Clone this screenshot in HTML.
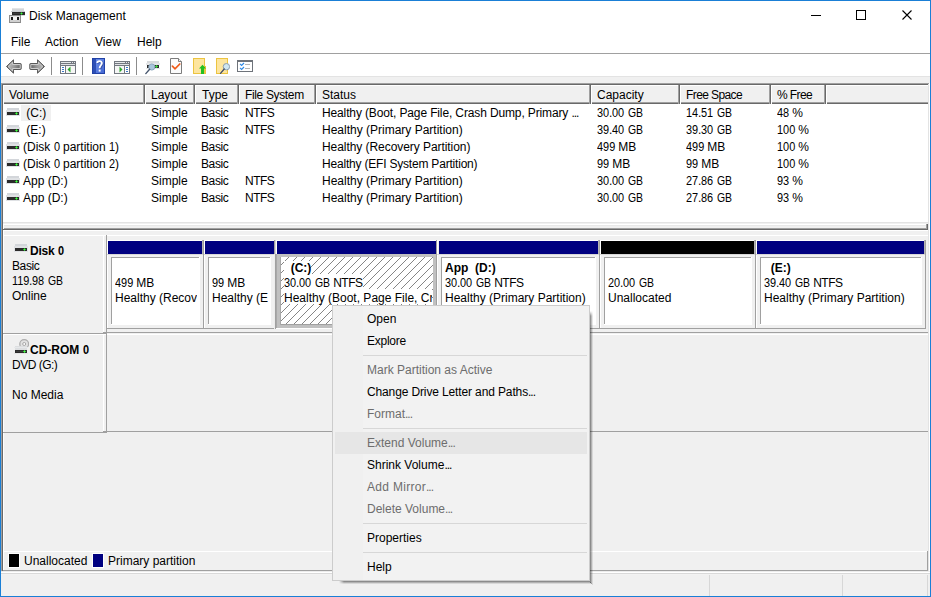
<!DOCTYPE html>
<html><head><meta charset="utf-8"><style>
html,body{margin:0;padding:0;width:931px;height:597px;overflow:hidden;background:#fff}
body div{position:absolute}
svg{display:block}
.el{letter-spacing:-1px}
.u{display:inline-block;transform:scaleX(.87);transform-origin:0 0;margin-right:-2.2px}
.n{letter-spacing:-0.5px}
.d{display:inline-block;transform:scaleX(.91);transform-origin:0 0}
.t{font-family:"Liberation Sans",sans-serif;font-size:12px;line-height:14px;white-space:pre;color:#000}
</style></head><body>
<div style="left:0px;top:0px;width:931px;height:597px;background:#fff;"></div>
<div class="t" style="left:29px;top:9px;">Disk Management</div>
<div class="t" style="left:11px;top:35px;">File</div>
<div class="t" style="left:45px;top:35px;">Action</div>
<div class="t" style="left:95px;top:35px;">View</div>
<div class="t" style="left:137px;top:35px;">Help</div>
<div style="left:1px;top:53px;width:929px;height:1px;background:#a0a0a0;"></div>
<div style="left:1px;top:76px;width:929px;height:1px;background:#e3e3e3;"></div>
<div style="left:1px;top:77px;width:929px;height:6px;background:#f0f0f0;"></div>
<div style="left:1px;top:83px;width:929px;height:1px;background:#a0a0a0;"></div>
<div style="left:2px;top:84px;width:927px;height:1px;background:#696969;"></div>
<div style="left:1px;top:83px;width:1px;height:489px;background:#a0a0a0;"></div>
<div style="left:2px;top:84px;width:1px;height:487px;background:#696969;"></div>
<div style="left:929px;top:83px;width:1px;height:489px;background:#ffffff;"></div>
<div style="left:928px;top:84px;width:1px;height:487px;background:#e3e3e3;"></div>
<div style="left:3px;top:85px;width:925px;height:137px;background:#ffffff;"></div>
<div style="left:3px;top:85px;width:142px;height:19px;background:#f0f0f0;"></div>
<div style="left:3px;top:102px;width:142px;height:1px;background:#a0a0a0;"></div>
<div style="left:3px;top:103px;width:142px;height:1px;background:#696969;"></div>
<div style="left:3px;top:85px;width:142px;height:1px;background:#ffffff;"></div>
<div style="left:3px;top:85px;width:1px;height:19px;background:#ffffff;"></div>
<div style="left:143px;top:85px;width:1px;height:19px;background:#a0a0a0;"></div>
<div style="left:144px;top:85px;width:1px;height:19px;background:#696969;"></div>
<div class="t" style="left:9px;top:88px;">Volume</div>
<div style="left:145px;top:85px;width:50px;height:19px;background:#f0f0f0;"></div>
<div style="left:145px;top:102px;width:50px;height:1px;background:#a0a0a0;"></div>
<div style="left:145px;top:103px;width:50px;height:1px;background:#696969;"></div>
<div style="left:145px;top:85px;width:50px;height:1px;background:#ffffff;"></div>
<div style="left:145px;top:85px;width:1px;height:19px;background:#ffffff;"></div>
<div style="left:193px;top:85px;width:1px;height:19px;background:#a0a0a0;"></div>
<div style="left:194px;top:85px;width:1px;height:19px;background:#696969;"></div>
<div class="t" style="left:151px;top:88px;">Layout</div>
<div style="left:195px;top:85px;width:44px;height:19px;background:#f0f0f0;"></div>
<div style="left:195px;top:102px;width:44px;height:1px;background:#a0a0a0;"></div>
<div style="left:195px;top:103px;width:44px;height:1px;background:#696969;"></div>
<div style="left:195px;top:85px;width:44px;height:1px;background:#ffffff;"></div>
<div style="left:195px;top:85px;width:1px;height:19px;background:#ffffff;"></div>
<div style="left:237px;top:85px;width:1px;height:19px;background:#a0a0a0;"></div>
<div style="left:238px;top:85px;width:1px;height:19px;background:#696969;"></div>
<div class="t" style="left:202px;top:88px;">Type</div>
<div style="left:239px;top:85px;width:77px;height:19px;background:#f0f0f0;"></div>
<div style="left:239px;top:102px;width:77px;height:1px;background:#a0a0a0;"></div>
<div style="left:239px;top:103px;width:77px;height:1px;background:#696969;"></div>
<div style="left:239px;top:85px;width:77px;height:1px;background:#ffffff;"></div>
<div style="left:239px;top:85px;width:1px;height:19px;background:#ffffff;"></div>
<div style="left:314px;top:85px;width:1px;height:19px;background:#a0a0a0;"></div>
<div style="left:315px;top:85px;width:1px;height:19px;background:#696969;"></div>
<div class="t" style="left:245px;top:88px;;letter-spacing:-0.35px;">File System</div>
<div style="left:316px;top:85px;width:275px;height:19px;background:#f0f0f0;"></div>
<div style="left:316px;top:102px;width:275px;height:1px;background:#a0a0a0;"></div>
<div style="left:316px;top:103px;width:275px;height:1px;background:#696969;"></div>
<div style="left:316px;top:85px;width:275px;height:1px;background:#ffffff;"></div>
<div style="left:316px;top:85px;width:1px;height:19px;background:#ffffff;"></div>
<div style="left:589px;top:85px;width:1px;height:19px;background:#a0a0a0;"></div>
<div style="left:590px;top:85px;width:1px;height:19px;background:#696969;"></div>
<div class="t" style="left:322px;top:88px;">Status</div>
<div style="left:591px;top:85px;width:89px;height:19px;background:#f0f0f0;"></div>
<div style="left:591px;top:102px;width:89px;height:1px;background:#a0a0a0;"></div>
<div style="left:591px;top:103px;width:89px;height:1px;background:#696969;"></div>
<div style="left:591px;top:85px;width:89px;height:1px;background:#ffffff;"></div>
<div style="left:591px;top:85px;width:1px;height:19px;background:#ffffff;"></div>
<div style="left:678px;top:85px;width:1px;height:19px;background:#a0a0a0;"></div>
<div style="left:679px;top:85px;width:1px;height:19px;background:#696969;"></div>
<div class="t" style="left:597px;top:88px;">Capacity</div>
<div style="left:680px;top:85px;width:91px;height:19px;background:#f0f0f0;"></div>
<div style="left:680px;top:102px;width:91px;height:1px;background:#a0a0a0;"></div>
<div style="left:680px;top:103px;width:91px;height:1px;background:#696969;"></div>
<div style="left:680px;top:85px;width:91px;height:1px;background:#ffffff;"></div>
<div style="left:680px;top:85px;width:1px;height:19px;background:#ffffff;"></div>
<div style="left:769px;top:85px;width:1px;height:19px;background:#a0a0a0;"></div>
<div style="left:770px;top:85px;width:1px;height:19px;background:#696969;"></div>
<div class="t" style="left:686px;top:88px;;letter-spacing:-0.6px;">Free Space</div>
<div style="left:771px;top:85px;width:55px;height:19px;background:#f0f0f0;"></div>
<div style="left:771px;top:102px;width:55px;height:1px;background:#a0a0a0;"></div>
<div style="left:771px;top:103px;width:55px;height:1px;background:#696969;"></div>
<div style="left:771px;top:85px;width:55px;height:1px;background:#ffffff;"></div>
<div style="left:771px;top:85px;width:1px;height:19px;background:#ffffff;"></div>
<div style="left:824px;top:85px;width:1px;height:19px;background:#a0a0a0;"></div>
<div style="left:825px;top:85px;width:1px;height:19px;background:#696969;"></div>
<div class="t" style="left:777px;top:88px;;letter-spacing:-0.6px;">% Free</div>
<div style="left:826px;top:85px;width:102px;height:19px;background:#f0f0f0;"></div>
<div style="left:826px;top:102px;width:102px;height:1px;background:#a0a0a0;"></div>
<div style="left:826px;top:103px;width:102px;height:1px;background:#696969;"></div>
<div style="left:826px;top:85px;width:102px;height:1px;background:#ffffff;"></div>
<div style="left:826px;top:85px;width:1px;height:19px;background:#ffffff;"></div>
<div style="left:21px;top:105px;width:30px;height:16px;background:#f0f0f0;"></div>
<div style="left:6px;top:108px;width:14px;height:8px"><svg width="14" height="8" viewBox="0 0 14 8"><rect x="1" y="0" width="12" height="2" fill="#d3d6da"/><rect x="0" y="2" width="14" height="6" fill="#dfe1e4"/><rect x="1" y="4" width="12" height="3" fill="#2b2b2b"/><rect x="9" y="5" width="3" height="1" fill="#2cbf2c"/><rect x="10" y="4" width="1" height="3" fill="#2cbf2c"/><rect x="10" y="5" width="1" height="1" fill="#48f048"/></svg></div>
<div class="t" style="left:23px;top:106px;"> (C:)</div>
<div class="t" style="left:151px;top:106px;">Simple</div>
<div class="t" style="left:201px;top:106px;;letter-spacing:-0.4px;">Basic</div>
<div class="t" style="left:245px;top:106px;"><span class="n">NTFS</span></div>
<div class="t" style="left:322px;top:106px;;letter-spacing:-0.13px;">Healthy (Boot, Page File, Crash Dump, Primary <span class="el">...</span></div>
<div class="t" style="left:597px;top:106px;"><span class="d" style="margin-right:-1.36px">30</span>.<span class="d" style="margin-right:-1.36px">00</span> <span class="u">GB</span></div>
<div class="t" style="left:686px;top:106px;"><span class="d" style="margin-right:-1.36px">14</span>.<span class="d" style="margin-right:-1.36px">51</span> <span class="u">GB</span></div>
<div class="t" style="left:777px;top:106px;"><span class="d" style="margin-right:-1.36px">48</span> %</div>
<div style="left:6px;top:125px;width:14px;height:8px"><svg width="14" height="8" viewBox="0 0 14 8"><rect x="1" y="0" width="12" height="2" fill="#d3d6da"/><rect x="0" y="2" width="14" height="6" fill="#dfe1e4"/><rect x="1" y="4" width="12" height="3" fill="#2b2b2b"/><rect x="9" y="5" width="3" height="1" fill="#2cbf2c"/><rect x="10" y="4" width="1" height="3" fill="#2cbf2c"/><rect x="10" y="5" width="1" height="1" fill="#48f048"/></svg></div>
<div class="t" style="left:23px;top:123px;"> (E:)</div>
<div class="t" style="left:151px;top:123px;">Simple</div>
<div class="t" style="left:201px;top:123px;;letter-spacing:-0.4px;">Basic</div>
<div class="t" style="left:245px;top:123px;"><span class="n">NTFS</span></div>
<div class="t" style="left:322px;top:123px;">Healthy (Primary Partition)</div>
<div class="t" style="left:597px;top:123px;"><span class="d" style="margin-right:-1.36px">39</span>.<span class="d" style="margin-right:-1.36px">40</span> <span class="u">GB</span></div>
<div class="t" style="left:686px;top:123px;"><span class="d" style="margin-right:-1.36px">39</span>.<span class="d" style="margin-right:-1.36px">30</span> <span class="u">GB</span></div>
<div class="t" style="left:777px;top:123px;"><span class="d" style="margin-right:-2.04px">100</span> %</div>
<div style="left:6px;top:142px;width:14px;height:8px"><svg width="14" height="8" viewBox="0 0 14 8"><rect x="1" y="0" width="12" height="2" fill="#d3d6da"/><rect x="0" y="2" width="14" height="6" fill="#dfe1e4"/><rect x="1" y="4" width="12" height="3" fill="#2b2b2b"/><rect x="9" y="5" width="3" height="1" fill="#2cbf2c"/><rect x="10" y="4" width="1" height="3" fill="#2cbf2c"/><rect x="10" y="5" width="1" height="1" fill="#48f048"/></svg></div>
<div class="t" style="left:23px;top:140px;">(Disk <span class="d" style="margin-right:-0.68px">0</span> partition <span class="d" style="margin-right:-0.68px">1</span>)</div>
<div class="t" style="left:151px;top:140px;">Simple</div>
<div class="t" style="left:201px;top:140px;;letter-spacing:-0.4px;">Basic</div>
<div class="t" style="left:322px;top:140px;;letter-spacing:-0.06px;">Healthy (Recovery Partition)</div>
<div class="t" style="left:597px;top:140px;"><span class="d" style="margin-right:-2.04px">499</span> MB</div>
<div class="t" style="left:686px;top:140px;"><span class="d" style="margin-right:-2.04px">499</span> MB</div>
<div class="t" style="left:777px;top:140px;"><span class="d" style="margin-right:-2.04px">100</span> %</div>
<div style="left:6px;top:159px;width:14px;height:8px"><svg width="14" height="8" viewBox="0 0 14 8"><rect x="1" y="0" width="12" height="2" fill="#d3d6da"/><rect x="0" y="2" width="14" height="6" fill="#dfe1e4"/><rect x="1" y="4" width="12" height="3" fill="#2b2b2b"/><rect x="9" y="5" width="3" height="1" fill="#2cbf2c"/><rect x="10" y="4" width="1" height="3" fill="#2cbf2c"/><rect x="10" y="5" width="1" height="1" fill="#48f048"/></svg></div>
<div class="t" style="left:23px;top:157px;">(Disk <span class="d" style="margin-right:-0.68px">0</span> partition <span class="d" style="margin-right:-0.68px">2</span>)</div>
<div class="t" style="left:151px;top:157px;">Simple</div>
<div class="t" style="left:201px;top:157px;;letter-spacing:-0.4px;">Basic</div>
<div class="t" style="left:322px;top:157px;;letter-spacing:-0.2px;">Healthy (EFI System Partition)</div>
<div class="t" style="left:597px;top:157px;"><span class="d" style="margin-right:-1.36px">99</span> MB</div>
<div class="t" style="left:686px;top:157px;"><span class="d" style="margin-right:-1.36px">99</span> MB</div>
<div class="t" style="left:777px;top:157px;"><span class="d" style="margin-right:-2.04px">100</span> %</div>
<div style="left:6px;top:176px;width:14px;height:8px"><svg width="14" height="8" viewBox="0 0 14 8"><rect x="1" y="0" width="12" height="2" fill="#d3d6da"/><rect x="0" y="2" width="14" height="6" fill="#dfe1e4"/><rect x="1" y="4" width="12" height="3" fill="#2b2b2b"/><rect x="9" y="5" width="3" height="1" fill="#2cbf2c"/><rect x="10" y="4" width="1" height="3" fill="#2cbf2c"/><rect x="10" y="5" width="1" height="1" fill="#48f048"/></svg></div>
<div class="t" style="left:23px;top:174px;">App (D:)</div>
<div class="t" style="left:151px;top:174px;">Simple</div>
<div class="t" style="left:201px;top:174px;;letter-spacing:-0.4px;">Basic</div>
<div class="t" style="left:245px;top:174px;"><span class="n">NTFS</span></div>
<div class="t" style="left:322px;top:174px;">Healthy (Primary Partition)</div>
<div class="t" style="left:597px;top:174px;"><span class="d" style="margin-right:-1.36px">30</span>.<span class="d" style="margin-right:-1.36px">00</span> <span class="u">GB</span></div>
<div class="t" style="left:686px;top:174px;"><span class="d" style="margin-right:-1.36px">27</span>.<span class="d" style="margin-right:-1.36px">86</span> <span class="u">GB</span></div>
<div class="t" style="left:777px;top:174px;"><span class="d" style="margin-right:-1.36px">93</span> %</div>
<div style="left:6px;top:193px;width:14px;height:8px"><svg width="14" height="8" viewBox="0 0 14 8"><rect x="1" y="0" width="12" height="2" fill="#d3d6da"/><rect x="0" y="2" width="14" height="6" fill="#dfe1e4"/><rect x="1" y="4" width="12" height="3" fill="#2b2b2b"/><rect x="9" y="5" width="3" height="1" fill="#2cbf2c"/><rect x="10" y="4" width="1" height="3" fill="#2cbf2c"/><rect x="10" y="5" width="1" height="1" fill="#48f048"/></svg></div>
<div class="t" style="left:23px;top:191px;">App (D:)</div>
<div class="t" style="left:151px;top:191px;">Simple</div>
<div class="t" style="left:201px;top:191px;;letter-spacing:-0.4px;">Basic</div>
<div class="t" style="left:245px;top:191px;"><span class="n">NTFS</span></div>
<div class="t" style="left:322px;top:191px;">Healthy (Primary Partition)</div>
<div class="t" style="left:597px;top:191px;"><span class="d" style="margin-right:-1.36px">30</span>.<span class="d" style="margin-right:-1.36px">00</span> <span class="u">GB</span></div>
<div class="t" style="left:686px;top:191px;"><span class="d" style="margin-right:-1.36px">27</span>.<span class="d" style="margin-right:-1.36px">86</span> <span class="u">GB</span></div>
<div class="t" style="left:777px;top:191px;"><span class="d" style="margin-right:-1.36px">93</span> %</div>
<div style="left:3px;top:222px;width:925px;height:1px;background:#e3e3e3;"></div>
<div style="left:3px;top:223px;width:925px;height:1px;background:#f0f0f0;"></div>
<div style="left:3px;top:224px;width:925px;height:6px;background:#f0f0f0;"></div>
<div style="left:3px;top:224px;width:924px;height:1px;background:#ffffff;"></div>
<div style="left:3px;top:225px;width:924px;height:1px;background:#e8e8e8;"></div>
<div style="left:3px;top:228px;width:925px;height:1px;background:#a0a0a0;"></div>
<div style="left:3px;top:229px;width:925px;height:1px;background:#696969;"></div>
<div style="left:926px;top:224px;width:1px;height:5px;background:#a0a0a0;"></div>
<div style="left:927px;top:224px;width:1px;height:6px;background:#696969;"></div>
<div style="left:3px;top:224px;width:1px;height:5px;background:#ffffff;"></div>
<div style="left:3px;top:230px;width:925px;height:341px;background:#f0f0f0;"></div>
<div style="left:3px;top:230px;width:925px;height:1px;background:#ffffff;"></div>
<div style="left:3px;top:230px;width:1px;height:341px;background:#ffffff;"></div>
<div style="left:4px;top:235px;width:924px;height:1px;background:#ffffff;"></div>
<div style="left:103px;top:236px;width:1px;height:97px;background:#ffffff;"></div>
<div style="left:106px;top:235px;width:1px;height:99px;background:#a0a0a0;"></div>
<div style="left:3px;top:333px;width:104px;height:1px;background:#a0a0a0;"></div>
<div style="left:103px;top:332px;width:825px;height:1px;background:#a0a0a0;"></div>
<div style="left:4px;top:334px;width:924px;height:1px;background:#ffffff;"></div>
<div style="left:103px;top:335px;width:1px;height:97px;background:#ffffff;"></div>
<div style="left:106px;top:334px;width:1px;height:99px;background:#a0a0a0;"></div>
<div style="left:3px;top:432px;width:104px;height:1px;background:#a0a0a0;"></div>
<div style="left:103px;top:431px;width:825px;height:1px;background:#a0a0a0;"></div>
<div style="left:14px;top:244px;width:14px;height:8px"><svg width="14" height="8" viewBox="0 0 14 8"><rect x="1" y="0" width="12" height="2" fill="#d3d6da"/><rect x="0" y="2" width="14" height="6" fill="#dfe1e4"/><rect x="1" y="4" width="12" height="3" fill="#2b2b2b"/><rect x="9" y="5" width="3" height="1" fill="#2cbf2c"/><rect x="10" y="4" width="1" height="3" fill="#2cbf2c"/><rect x="10" y="5" width="1" height="1" fill="#48f048"/></svg></div>
<div class="t" style="left:30px;top:244px;font-weight:bold;letter-spacing:-0.2px;">Disk <span class="d" style="margin-right:-0.68px">0</span></div>
<div class="t" style="left:12px;top:259px;;letter-spacing:-0.4px;">Basic</div>
<div class="t" style="left:12px;top:274px;"><span class="d" style="margin-right:-2.04px">119</span>.<span class="d" style="margin-right:-1.36px">98</span> <span class="u">GB</span></div>
<div class="t" style="left:12px;top:289px;">Online</div>
<div class="t" style="left:30px;top:343px;font-weight:bold">CD-ROM <span class="d" style="margin-right:-0.68px">0</span></div>
<div class="t" style="left:12px;top:358px;;letter-spacing:-0.5px;">DVD (G:)</div>
<div class="t" style="left:12px;top:388px;">No Media</div>
<div style="left:107px;top:240px;width:97px;height:1px;background:#ffffff;"></div>
<div style="left:107px;top:240px;width:1px;height:89px;background:#ffffff;"></div>
<div style="left:108px;top:241px;width:94px;height:13px;background:#000080;"></div>
<div style="left:107px;top:254px;width:96px;height:1px;background:#d8d8d8;"></div>
<div style="left:203px;top:240px;width:1px;height:89px;background:#a0a0a0;"></div>
<div style="left:202px;top:240px;width:1px;height:14px;background:#b4b4b4;"></div>
<div style="left:107px;top:328px;width:97px;height:1px;background:#a0a0a0;"></div>
<div style="left:111px;top:257px;width:89px;height:68px;background:#ffffff;"></div>
<div style="left:111px;top:257px;width:88px;height:1px;background:#a0a0a0;"></div>
<div style="left:111px;top:257px;width:1px;height:67px;background:#a0a0a0;"></div>
<div style="left:115px;top:260px;width:82px;height:50px;overflow:hidden">
<div class="t" style="left:0;top:16px;"><span class="d" style="margin-right:-2.04px">499</span> MB</div>
<div class="t" style="left:0;top:31px">Healthy (Recovery Partition)</div>
</div>
<div style="left:204px;top:240px;width:71px;height:1px;background:#ffffff;"></div>
<div style="left:204px;top:240px;width:1px;height:89px;background:#ffffff;"></div>
<div style="left:205px;top:241px;width:69px;height:13px;background:#000080;"></div>
<div style="left:204px;top:254px;width:70px;height:1px;background:#d8d8d8;"></div>
<div style="left:274px;top:240px;width:1px;height:89px;background:#a0a0a0;"></div>
<div style="left:204px;top:328px;width:71px;height:1px;background:#a0a0a0;"></div>
<div style="left:208px;top:257px;width:63px;height:68px;background:#ffffff;"></div>
<div style="left:208px;top:257px;width:62px;height:1px;background:#a0a0a0;"></div>
<div style="left:208px;top:257px;width:1px;height:67px;background:#a0a0a0;"></div>
<div style="left:212px;top:260px;width:56px;height:50px;overflow:hidden">
<div class="t" style="left:0;top:16px;"><span class="d" style="margin-right:-1.36px">99</span> MB</div>
<div class="t" style="left:0;top:31px">Healthy (EFI System Partition)</div>
</div>
<div style="left:275px;top:240px;width:162px;height:1px;background:#ffffff;"></div>
<div style="left:275px;top:240px;width:1px;height:89px;background:#ffffff;"></div>
<div style="left:277px;top:241px;width:159px;height:13px;background:#000080;"></div>
<div style="left:275px;top:254px;width:161px;height:1px;background:#d8d8d8;"></div>
<div style="left:436px;top:240px;width:1px;height:89px;background:#a0a0a0;"></div>
<div style="left:275px;top:328px;width:162px;height:1px;background:#a0a0a0;"></div>
<div style="left:275px;top:240px;width:1px;height:14px;background:#d8d8d8;"></div>
<div style="left:276px;top:240px;width:1px;height:14px;background:#ffffff;"></div>
<div style="left:275px;top:254px;width:161px;height:74px;background:#c0c0c0;"></div>
<div style="left:275px;top:254px;width:1px;height:74px;background:#a0a0a0;"></div>
<div style="left:276px;top:254px;width:1px;height:74px;background:#a8a8a8;"></div>
<div style="left:280px;top:257px;width:1px;height:68px;background:#a8a8a8;"></div>
<div style="left:274px;top:254px;width:1px;height:75px;background:#ececec;"></div>
<div style="left:276px;top:328px;width:161px;height:1px;background:#ffffff;"></div>
<div style="left:281px;top:257px;width:152px;height:67px;background:#fff;overflow:hidden"><svg width="160" height="67" style="position:absolute;left:0;top:0" shape-rendering="crispEdges"><defs><pattern id="h" width="8" height="8" patternUnits="userSpaceOnUse" x="0" y="0"><path d="M0 7h1v1h-1zM1 6h1v1h-1zM2 5h1v1h-1zM3 4h1v1h-1zM4 3h1v1h-1zM5 2h1v1h-1zM6 1h1v1h-1zM7 0h1v1h-1z" fill="#858585"/></pattern></defs><rect width="160" height="67" fill="url(#h)"/></svg></div>
<div style="left:281px;top:324px;width:152px;height:1px;background:#a0a0a0;"></div>
<div style="left:284px;top:260px;width:148px;height:50px;overflow:hidden">
<div style="left:0;top:1px;width:26px;height:13px;background:#fff"></div>
<div style="left:0;top:14px;width:79px;height:15px;background:#fff"></div>
<div style="left:0;top:29px;width:200px;height:15px;background:#fff"></div>
<div class="t" style="left:0;top:1px;font-weight:bold">  (C:)</div>
<div class="t" style="left:0;top:16px;"><span class="d" style="margin-right:-1.36px">30</span>.<span class="d" style="margin-right:-1.36px">00</span> <span class="u">GB</span> <span class="n">NTFS</span></div>
<div class="t" style="left:0;top:31px">Healthy (Boot, Page File, Crash Dump, Primary Partition)</div>
</div>
<div style="left:437px;top:240px;width:163px;height:1px;background:#ffffff;"></div>
<div style="left:437px;top:240px;width:1px;height:89px;background:#ffffff;"></div>
<div style="left:439px;top:241px;width:159px;height:13px;background:#000080;"></div>
<div style="left:437px;top:254px;width:162px;height:1px;background:#d8d8d8;"></div>
<div style="left:599px;top:240px;width:1px;height:89px;background:#a0a0a0;"></div>
<div style="left:598px;top:240px;width:1px;height:14px;background:#b4b4b4;"></div>
<div style="left:437px;top:328px;width:163px;height:1px;background:#a0a0a0;"></div>
<div style="left:441px;top:257px;width:155px;height:68px;background:#ffffff;"></div>
<div style="left:441px;top:257px;width:154px;height:1px;background:#a0a0a0;"></div>
<div style="left:441px;top:257px;width:1px;height:67px;background:#a0a0a0;"></div>
<div style="left:445px;top:260px;width:148px;height:50px;overflow:hidden">
<div class="t" style="left:0;top:1px;font-weight:bold">App  (D:)</div>
<div class="t" style="left:0;top:16px;"><span class="d" style="margin-right:-1.36px">30</span>.<span class="d" style="margin-right:-1.36px">00</span> <span class="u">GB</span> <span class="n">NTFS</span></div>
<div class="t" style="left:0;top:31px">Healthy (Primary Partition)</div>
</div>
<div style="left:600px;top:240px;width:156px;height:1px;background:#ffffff;"></div>
<div style="left:600px;top:240px;width:1px;height:89px;background:#ffffff;"></div>
<div style="left:601px;top:241px;width:153px;height:13px;background:#000000;"></div>
<div style="left:600px;top:254px;width:155px;height:1px;background:#d8d8d8;"></div>
<div style="left:755px;top:240px;width:1px;height:89px;background:#a0a0a0;"></div>
<div style="left:754px;top:240px;width:1px;height:14px;background:#b4b4b4;"></div>
<div style="left:600px;top:328px;width:156px;height:1px;background:#a0a0a0;"></div>
<div style="left:604px;top:257px;width:148px;height:68px;background:#ffffff;"></div>
<div style="left:604px;top:257px;width:147px;height:1px;background:#a0a0a0;"></div>
<div style="left:604px;top:257px;width:1px;height:67px;background:#a0a0a0;"></div>
<div style="left:608px;top:260px;width:141px;height:50px;overflow:hidden">
<div class="t" style="left:0;top:16px;"><span class="d" style="margin-right:-1.36px">20</span>.<span class="d" style="margin-right:-1.36px">00</span> <span class="u">GB</span></div>
<div class="t" style="left:0;top:31px">Unallocated</div>
</div>
<div style="left:756px;top:240px;width:170px;height:1px;background:#ffffff;"></div>
<div style="left:756px;top:240px;width:1px;height:89px;background:#ffffff;"></div>
<div style="left:757px;top:241px;width:167px;height:13px;background:#000080;"></div>
<div style="left:756px;top:254px;width:169px;height:1px;background:#d8d8d8;"></div>
<div style="left:925px;top:240px;width:1px;height:89px;background:#a0a0a0;"></div>
<div style="left:924px;top:240px;width:1px;height:14px;background:#b4b4b4;"></div>
<div style="left:756px;top:328px;width:170px;height:1px;background:#a0a0a0;"></div>
<div style="left:760px;top:257px;width:162px;height:68px;background:#ffffff;"></div>
<div style="left:760px;top:257px;width:161px;height:1px;background:#a0a0a0;"></div>
<div style="left:760px;top:257px;width:1px;height:67px;background:#a0a0a0;"></div>
<div style="left:764px;top:260px;width:155px;height:50px;overflow:hidden">
<div class="t" style="left:0;top:1px;font-weight:bold">  (E:)</div>
<div class="t" style="left:0;top:16px;"><span class="d" style="margin-right:-1.36px">39</span>.<span class="d" style="margin-right:-1.36px">40</span> <span class="u">GB</span> <span class="n">NTFS</span></div>
<div class="t" style="left:0;top:31px">Healthy (Primary Partition)</div>
</div>
<div style="left:3px;top:551px;width:925px;height:20px;background:#f0f0f0;"></div>
<div style="left:3px;top:551px;width:924px;height:1px;background:#ffffff;"></div>
<div style="left:3px;top:551px;width:1px;height:20px;background:#ffffff;"></div>
<div style="left:3px;top:570px;width:925px;height:1px;background:#a0a0a0;"></div>
<div style="left:927px;top:551px;width:1px;height:20px;background:#a0a0a0;"></div>
<div style="left:8px;top:553px;width:12px;height:15px;background:#ffffff;"></div>
<div style="left:9px;top:554px;width:10px;height:13px;background:#000;"></div>
<div class="t" style="left:24px;top:554px;">Unallocated</div>
<div style="left:92px;top:553px;width:12px;height:15px;background:#ffffff;"></div>
<div style="left:93px;top:554px;width:10px;height:13px;background:#000080;"></div>
<div class="t" style="left:108px;top:554px;">Primary partition</div>
<div style="left:1px;top:571px;width:929px;height:1px;background:#ececec;"></div>
<div style="left:1px;top:572px;width:929px;height:1px;background:#ffffff;"></div>
<div style="left:1px;top:573px;width:929px;height:1px;background:#d9d9d9;"></div>
<div style="left:1px;top:574px;width:929px;height:22px;background:#f0f0f0;"></div>
<div style="left:1px;top:574px;width:929px;height:1px;background:#f2f2f2;"></div>
<div style="left:709px;top:575px;width:1px;height:21px;background:#d7d7d7;"></div>
<div style="left:842px;top:575px;width:1px;height:21px;background:#d7d7d7;"></div>
<div style="left:927px;top:575px;width:1px;height:21px;background:#d7d7d7;"></div>
<div style="left:9px;top:8px;width:17px;height:15px"><svg width="17" height="15" viewBox="0 0 17 15" shape-rendering="crispEdges"><rect x="3" y="0" width="12" height="1" fill="#e2e4e6"/><rect x="3" y="1" width="12" height="2" fill="#d3d6d9"/><rect x="2" y="3" width="14" height="1" fill="#c9ccd0"/><rect x="3" y="4" width="13" height="3" fill="#2a2a2a"/><rect x="4" y="5" width="7" height="1" fill="#3c3c3c"/><rect x="12" y="5" width="1" height="1" fill="#40f040"/><rect x="11" y="5" width="1" height="1" fill="#2a9a2a"/><rect x="13" y="5" width="1" height="1" fill="#2a9a2a"/><rect x="12" y="4" width="1" height="1" fill="#2a9a2a"/><rect x="12" y="6" width="1" height="1" fill="#2a9a2a"/><rect x="3" y="7" width="13" height="1" fill="#d8dadc"/><rect x="0" y="7" width="12" height="8" fill="#8c8c8c"/><rect x="1" y="8" width="10" height="6" fill="#e6e6e6"/><rect x="1" y="12" width="10" height="2" fill="#d0d0d0"/><rect x="2" y="9" width="2" height="3" fill="#1a1a1a"/><rect x="8" y="9" width="2" height="3" fill="#1a1a1a"/><rect x="4" y="9" width="4" height="3" fill="#f4f4f4"/></svg></div>
<div style="left:811px;top:15px;width:10px;height:1px;background:#000"></div>
<div style="left:856px;top:10px;width:8px;height:8px;border:1px solid #000"></div>
<div style="left:901px;top:9px;width:12px;height:12px"><svg width="12" height="12" viewBox="0 0 12 12"><path d="M1.5 1.5 L10.5 10.5 M10.5 1.5 L1.5 10.5" stroke="#000" stroke-width="1.1"/></svg></div>
<div style="left:5px;top:59px;width:17px;height:16px"><svg width="17" height="16" viewBox="0 0 17 16"><defs><linearGradient id="ga" x1="0" y1="0" x2="1" y2="0.3"><stop offset="0" stop-color="#c4c4c4"/><stop offset="0.6" stop-color="#9a9a9a"/><stop offset="1" stop-color="#707070"/></linearGradient></defs><path d="M1.5 7.5 L8.5 0.8 L8.5 4.5 L15.5 4.5 Q16.2 4.5 16.2 5.2 L16.2 9.8 Q16.2 10.5 15.5 10.5 L8.5 10.5 L8.5 14.2 Z" fill="#6a6a6a" stroke="#5a5a5a" stroke-width="1"/><path d="M3 7.5 L7.6 3 L7.6 5.5 L15.2 5.5 L15.2 9.5 L7.6 9.5 L7.6 12 Z" fill="url(#ga)" stroke="#d6d6d6" stroke-width="0.9"/></svg></div>
<div style="left:29px;top:59px;width:17px;height:16px"><svg width="17" height="16" viewBox="0 0 17 16"><defs><linearGradient id="gb" x1="0" y1="0" x2="1" y2="0.3"><stop offset="0" stop-color="#c4c4c4"/><stop offset="0.6" stop-color="#9a9a9a"/><stop offset="1" stop-color="#707070"/></linearGradient></defs><g transform="translate(17,0) scale(-1,1)"><path d="M1.5 7.5 L8.5 0.8 L8.5 4.5 L15.5 4.5 Q16.2 4.5 16.2 5.2 L16.2 9.8 Q16.2 10.5 15.5 10.5 L8.5 10.5 L8.5 14.2 Z" fill="#6a6a6a" stroke="#5a5a5a" stroke-width="1"/><path d="M3 7.5 L7.6 3 L7.6 5.5 L15.2 5.5 L15.2 9.5 L7.6 9.5 L7.6 12 Z" fill="url(#gb)" stroke="#d6d6d6" stroke-width="0.9"/></g></svg></div>
<div style="left:51px;top:57px;width:1px;height:18px;background:#8c8c8c"></div>
<div style="left:82px;top:57px;width:1px;height:18px;background:#8c8c8c"></div>
<div style="left:136px;top:57px;width:1px;height:18px;background:#8c8c8c"></div>
<div style="left:60px;top:61px;width:16px;height:13px"><svg width="16" height="13" viewBox="0 0 16 13"><rect x="0" y="0" width="16" height="13" fill="#737880"/><rect x="1" y="1" width="10" height="1" fill="#e6e8ea"/><rect x="12" y="1" width="1" height="1" fill="#e6e8ea"/><rect x="14" y="1" width="1" height="1" fill="#e6e8ea"/><rect x="1" y="3" width="14" height="1" fill="#dfe1e4"/><rect x="1" y="5" width="4" height="7" fill="#ffffff"/><rect x="6" y="5" width="9" height="7" fill="#f6f6f6"/><rect x="2" y="6" width="2" height="1" fill="#3b78c8"/><rect x="2" y="8" width="2" height="1" fill="#3b78c8"/><rect x="2" y="10" width="2" height="1" fill="#3b78c8"/><path d="M7.5 8.5 L10.5 5.5 L10.5 11.5 Z" fill="#2aa82a"/></svg></div>
<div style="left:114px;top:61px;width:16px;height:13px"><svg width="16" height="13" viewBox="0 0 16 13"><rect x="0" y="0" width="16" height="13" fill="#737880"/><rect x="1" y="1" width="10" height="1" fill="#e6e8ea"/><rect x="12" y="1" width="1" height="1" fill="#e6e8ea"/><rect x="14" y="1" width="1" height="1" fill="#e6e8ea"/><rect x="1" y="3" width="14" height="1" fill="#dfe1e4"/><rect x="11" y="5" width="4" height="7" fill="#ffffff"/><rect x="1" y="5" width="9" height="7" fill="#f6f6f6"/><rect x="12" y="6" width="2" height="1" fill="#3b78c8"/><rect x="12" y="8" width="2" height="1" fill="#3b78c8"/><rect x="12" y="10" width="2" height="1" fill="#3b78c8"/><path d="M8.5 8.5 L5.5 5.5 L5.5 11.5 Z" fill="#2aa82a"/></svg></div>
<div style="left:92px;top:58px;width:13px;height:16px"><svg width="13" height="16" viewBox="0 0 13 16"><defs><linearGradient id="gh" x1="0" y1="0" x2="1" y2="1"><stop offset="0" stop-color="#7093ea"/><stop offset="1" stop-color="#4468d4"/></linearGradient></defs><rect x="0" y="0" width="13" height="16" fill="#2242a6"/><rect x="1" y="1" width="11" height="14" fill="url(#gh)"/><rect x="1" y="1" width="3" height="14" fill="#2d4fb6"/><path d="M5.6 5.2 C5.6 2.9 10.2 2.7 10.2 5.3 C10.2 7.3 7.9 7.7 7.9 10.4" fill="none" stroke="#1a2a6a" stroke-opacity="0.45" stroke-width="1.9" transform="translate(0.6,0.5)"/><path d="M5.3 5 C5.3 2.7 9.9 2.5 9.9 5.1 C9.9 7.1 7.6 7.5 7.6 10.2" fill="none" stroke="#fff" stroke-width="1.8"/><rect x="6.7" y="11.6" width="1.9" height="2" fill="#fff"/></svg></div>
<div style="left:145px;top:60px;width:16px;height:15px"><svg width="16" height="15" viewBox="0 0 16 15"><rect x="2" y="1" width="12" height="2" fill="#d8dadc"/><rect x="1" y="3" width="14" height="2" fill="#e4e6e8"/><rect x="2" y="5" width="12" height="3" fill="#2b2b2b"/><rect x="1" y="8" width="14" height="1" fill="#e4e6e8"/><rect x="11" y="6" width="1" height="1" fill="#40f040"/><rect x="10" y="6" width="3" height="1" fill="#38c838"/><rect x="11" y="5" width="1" height="3" fill="#38c838"/><circle cx="6.8" cy="7" r="3.1" fill="#a9c6dc" stroke="#8aa4bb" stroke-width="0.9"/><path d="M4.6 9.3 L0.8 13.6" stroke="#46566e" stroke-width="1.4" stroke-linecap="round"/></svg></div>
<div style="left:170px;top:58px;width:12px;height:16px"><svg width="12" height="16" viewBox="0 0 12 16"><path d="M0.5 0.5 L8.5 0.5 L11.5 3.5 L11.5 15.5 L0.5 15.5 Z" fill="#fbfbfb" stroke="#7c7c7c"/><path d="M8.5 0.5 L8.5 3.5 L11.5 3.5" fill="#f0f0f0" stroke="#7c7c7c"/><path d="M2.4 8.2 L5 10.8 L9.8 6" fill="none" stroke="#f05a16" stroke-width="1.7" stroke-linecap="round"/></svg></div>
<div style="left:193px;top:58px;width:13px;height:16px"><svg width="13" height="16" viewBox="0 0 13 16"><rect x="0" y="0" width="12" height="16" fill="#ecc440"/><rect x="1" y="1" width="10" height="14" fill="#fde59e"/><rect x="11" y="8" width="2" height="8" fill="#ecc440"/><path d="M9.5 6.8 L13 10.5 L11 10.5 L11 16 L8 16 L8 10.5 L6 10.5 Z" fill="#22bf22"/></svg></div>
<div style="left:216px;top:58px;width:14px;height:16px"><svg width="14" height="16" viewBox="0 0 14 16"><rect x="0" y="0" width="12" height="16" fill="#ecc440"/><rect x="1" y="1" width="10" height="14" fill="#fde59e"/><rect x="11" y="12" width="1" height="4" fill="#ecc440"/><circle cx="10.4" cy="8.7" r="3.2" fill="#cfe6f2" stroke="#8c9eae" stroke-width="1"/><path d="M8.2 11 L4.5 15.3" stroke="#3e4c68" stroke-width="1.3" stroke-linecap="round"/></svg></div>
<div style="left:237px;top:60px;width:16px;height:12px"><svg width="16" height="12" viewBox="0 0 16 12"><rect x="0" y="0" width="16" height="12" fill="#6e737a"/><rect x="1" y="2" width="14" height="9" fill="#ffffff"/><path d="M3 3.8 L4.6 5.4 L7 3" fill="none" stroke="#2e8ae6" stroke-width="1.2"/><path d="M3 7.8 L4.6 9.4 L7 7" fill="none" stroke="#2e8ae6" stroke-width="1.2"/><rect x="8" y="4" width="5" height="1" fill="#b4b4b4"/><rect x="8" y="8" width="5" height="1" fill="#b4b4b4"/></svg></div>
<div style="left:14px;top:338px;width:15px;height:16px"><svg width="15" height="16" viewBox="0 0 15 16"><circle cx="10.2" cy="6" r="4.4" fill="#e2e2e2" stroke="#adadad" stroke-width="1.3"/><circle cx="10.2" cy="6" r="1.5" fill="#fdfdfd" stroke="#a8a8a8" stroke-width="1"/><rect x="1" y="8" width="12" height="4" fill="#dcdee0"/><rect x="0" y="9" width="14" height="1" fill="#e6e8ea"/><rect x="1" y="12" width="12" height="3" fill="#2b2b2b"/><rect x="2" y="13" width="7" height="1" fill="#3a3a3a"/><rect x="9" y="13" width="3" height="1" fill="#36c836"/><rect x="10" y="12" width="1" height="3" fill="#36c836"/><rect x="10" y="13" width="1" height="1" fill="#50f050"/><rect x="0" y="15" width="14" height="1" fill="#e4e4e4"/></svg></div>
<div style="left:590px;top:311px;width:1px;height:272px;background:linear-gradient(to bottom, rgba(0,0,0,0), rgba(0,0,0,0.42) 5px)"></div>
<div style="left:339px;top:581px;width:251px;height:1px;background:linear-gradient(to right, rgba(0,0,0,0), rgba(0,0,0,0.42) 5px)"></div>
<div style="left:591px;top:311px;width:1px;height:273px;background:linear-gradient(to bottom, rgba(0,0,0,0), rgba(0,0,0,0.26) 5px)"></div>
<div style="left:339px;top:582px;width:252px;height:1px;background:linear-gradient(to right, rgba(0,0,0,0), rgba(0,0,0,0.26) 5px)"></div>
<div style="left:592px;top:311px;width:1px;height:274px;background:linear-gradient(to bottom, rgba(0,0,0,0), rgba(0,0,0,0.1) 5px)"></div>
<div style="left:339px;top:583px;width:253px;height:1px;background:linear-gradient(to right, rgba(0,0,0,0), rgba(0,0,0,0.1) 5px)"></div>
<div style="left:332px;top:305px;width:258px;height:276px;background:#cccccc;"></div>
<div style="left:333px;top:306px;width:256px;height:274px;background:#f2f2f2;"></div>
<div style="left:333px;top:306px;width:30px;height:274px;background:#f0f0f0;"></div>
<div style="left:335px;top:432px;width:252px;height:22px;background:#e6e6e6;"></div>
<div class="t" style="left:367px;top:312px;">Open</div>
<div class="t" style="left:367px;top:334px;;letter-spacing:-0.25px;">Explore</div>
<div style="left:363px;top:355px;width:224px;height:1px;background:#d7d7d7;"></div>
<div class="t" style="left:367px;top:363px;color:#6d6d6d">Mark Partition as Active</div>
<div class="t" style="left:367px;top:385px;;letter-spacing:-0.13px;">Change Drive Letter and Paths<span class="el">...</span></div>
<div class="t" style="left:367px;top:407px;color:#6d6d6d">Format<span class="el">...</span></div>
<div style="left:363px;top:428px;width:224px;height:1px;background:#d7d7d7;"></div>
<div class="t" style="left:367px;top:436px;color:#6d6d6d">Extend Volume<span class="el">...</span></div>
<div class="t" style="left:367px;top:458px;">Shrink Volume<span class="el">...</span></div>
<div class="t" style="left:367px;top:480px;color:#6d6d6d;letter-spacing:0.3px;">Add Mirror<span class="el">...</span></div>
<div class="t" style="left:367px;top:502px;color:#6d6d6d">Delete Volume<span class="el">...</span></div>
<div style="left:363px;top:523px;width:224px;height:1px;background:#d7d7d7;"></div>
<div class="t" style="left:367px;top:531px;">Properties</div>
<div style="left:363px;top:552px;width:224px;height:1px;background:#d7d7d7;"></div>
<div class="t" style="left:367px;top:560px;">Help</div>
<div style="left:0;top:0;width:929px;height:595px;border:1px solid #1a7fd6;background:transparent"></div>
</body></html>
